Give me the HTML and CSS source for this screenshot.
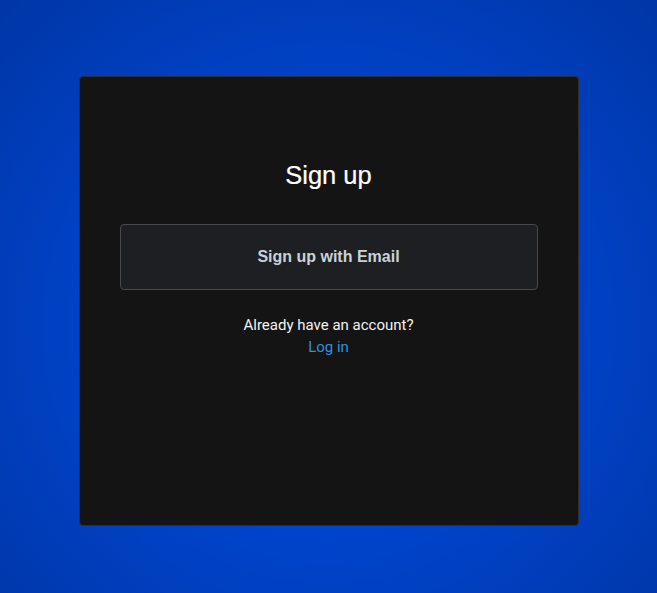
FILE: index.html
```html
<!DOCTYPE html>
<html lang="en">
<head>
<meta charset="utf-8">
<title>Sign up</title>
<link rel="stylesheet" href="styles.css">
</head>
<body>
<main class="card">
  <h1 class="title">Sign up</h1>
  <button class="email-btn" type="button">Sign up with Email</button>
  <p class="prompt">Already have an account?</p>
  <a class="login" href="#">Log in</a>
</main>
</body>
</html>
```

FILE: styles.css
```css
html, body {
  margin: 0;
  height: 100%;
}
body {
  background: radial-gradient(ellipse at 50% 55%, #0049da 0%, #0044cc 45%, #0036a6 100%);
  display: flex;
  justify-content: center;
  align-items: flex-start;
  padding-top: 76px;
  box-sizing: border-box;
  font-family: Roboto, "Liberation Sans", Arial, sans-serif;
}
.card {
  width: 500px;
  height: 450px;
  box-sizing: border-box;
  background: #141414;
  border: 1px solid #2e2e2e;
  border-radius: 4px;
  padding: 0 40px;
  display: flex;
  flex-direction: column;
  align-items: center;
}
.title {
  margin: 81px 0 0;
  font-family: "Liberation Sans", Arial, sans-serif;
  font-weight: 400;
  font-size: 25.5px;
  line-height: 34px;
  color: #ffffff;
  -webkit-text-stroke: 0.2px #ffffff;
}
.email-btn {
  margin-top: 32px;
  width: 100%;
  height: 66px;
  background: #1e1f22;
  border: 1px solid #484848;
  border-radius: 4px;
  color: #c9d1d9;
  font-family: "Liberation Sans", Arial, sans-serif;
  font-weight: 700;
  font-size: 16px;
  cursor: pointer;
}
.prompt {
  margin: 24px 0 0;
  font-size: 15px;
  line-height: 22px;
  color: #f2f2f2;
}
.login {
  font-size: 15px;
  line-height: 22px;
  color: #2f8fdc;
  text-decoration: none;
}
```
